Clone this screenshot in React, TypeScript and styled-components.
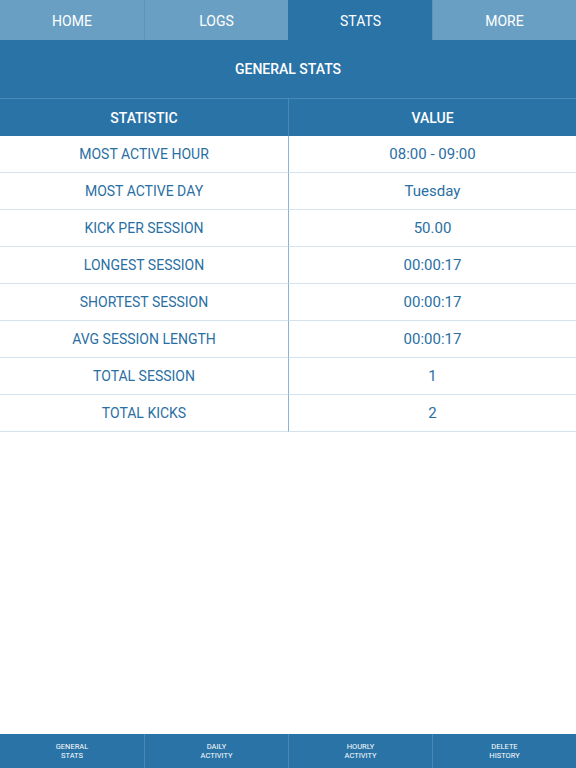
import React from 'react';
import styled, { createGlobalStyle } from 'styled-components';

const GlobalStyle = createGlobalStyle`
  html, body {
    margin: 0;
    padding: 0;
    background: #fff;
  }
  body {
    font-family: Roboto, "Liberation Sans", sans-serif;
  }
`;

const Page = styled.div`
  height: 768px;
  display: flex;
  flex-direction: column;
  background: #fff;
`;

const TopTabs = styled.nav`
  display: grid;
  grid-template-columns: repeat(4, 1fr);
  height: 40px;
`;

const TopTab = styled.div<{ $active?: boolean }>`
  display: flex;
  align-items: center;
  justify-content: center;
  padding-top: 1px;
  color: #fff;
  font-size: 14px;
  background: ${(p) => (p.$active ? '#2a73a7' : '#6a9fc4')};
  border-left: 1px solid ${(p) => (p.$active ? '#2a73a7' : '#5d94bc')};
  &:first-child {
    border-left: none;
  }
`;

const Banner = styled.div`
  height: 58px;
  display: flex;
  align-items: center;
  justify-content: center;
  background: #2a73a7;
  color: #fff;
  font-size: 14px;
  font-weight: 500;
`;

const Table = styled.div`
  display: grid;
  grid-template-columns: 288px 288px;
`;

const HeadCell = styled.div`
  height: 37px;
  display: flex;
  align-items: center;
  justify-content: center;
  background: #2a73a7;
  color: #fff;
  font-size: 14px;
  font-weight: 500;
  border-top: 1px solid #4a88b6;
  & + & {
    border-left: 1px solid #4a88b6;
  }
`;

const Cell = styled.div<{ $right?: boolean }>`
  height: 36px;
  display: flex;
  align-items: center;
  justify-content: center;
  color: #2a6fa3;
  font-size: ${(p) => (p.$right ? '15px' : '14px')};
  border-bottom: 1px solid #d5e3ef;
  border-left: ${(p) => (p.$right ? '1px solid #8ab4d6' : 'none')};
`;

const Spacer = styled.div`
  flex: 1;
`;

const BottomTabs = styled.nav`
  display: grid;
  grid-template-columns: repeat(4, 1fr);
  height: 34px;
  background: #2a73a7;
`;

const BottomTab = styled.div`
  display: flex;
  align-items: center;
  justify-content: center;
  text-align: center;
  color: #fff;
  font-size: 7.5px;
  line-height: 9px;
  text-transform: uppercase;
  & + & {
    border-left: 1px solid #4a88b6;
  }
`;

const tabs = ['HOME', 'LOGS', 'STATS', 'MORE'];

const rows: [string, string][] = [
  ['MOST ACTIVE HOUR', '08:00 - 09:00'],
  ['MOST ACTIVE DAY', 'Tuesday'],
  ['KICK PER SESSION', '50.00'],
  ['LONGEST SESSION', '00:00:17'],
  ['SHORTEST SESSION', '00:00:17'],
  ['AVG SESSION LENGTH', '00:00:17'],
  ['TOTAL SESSION', '1'],
  ['TOTAL KICKS', '2'],
];

const bottom = [
  ['General', 'Stats'],
  ['Daily', 'Activity'],
  ['Hourly', 'Activity'],
  ['Delete', 'History'],
];

export default function App() {
  return (
    <Page>
      <GlobalStyle />
      <TopTabs>
        {tabs.map((t) => (
          <TopTab key={t} $active={t === 'STATS'}>
            {t}
          </TopTab>
        ))}
      </TopTabs>
      <Banner>GENERAL STATS</Banner>
      <Table>
        <HeadCell>STATISTIC</HeadCell>
        <HeadCell>VALUE</HeadCell>
        {rows.map(([k, v]) => (
          <React.Fragment key={k}>
            <Cell>{k}</Cell>
            <Cell $right>{v}</Cell>
          </React.Fragment>
        ))}
      </Table>
      <Spacer />
      <BottomTabs>
        {bottom.map(([a, b]) => (
          <BottomTab key={a}>
            {a}
            <br />
            {b}
          </BottomTab>
        ))}
      </BottomTabs>
    </Page>
  );
}
